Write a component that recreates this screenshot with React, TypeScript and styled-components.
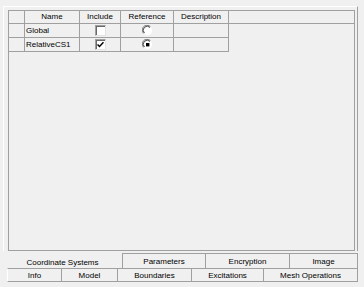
import React from "react";
import styled, { createGlobalStyle } from "styled-components";

const Global = createGlobalStyle`
  html, body { margin: 0; padding: 0; background: #f0f0f0; }
  body { font-family: "Liberation Sans", Arial, sans-serif; font-size: 8px; color: #000; }
`;

const Root = styled.div`
  width: 364px;
  height: 287px;
  background: #f0f0f0;
  overflow: hidden;
`;

const Panel = styled.div`
  margin: 6px 0 0 3px;
  width: 355px;
  height: 245px;
  box-sizing: border-box;
  border-top: 1px solid #ffffff;
  border-left: 1px solid #ffffff;
  border-right: 1px solid #a0a0a0;
  padding: 3px 3px 0 4px;
`;

const Grid = styled.div`
  width: 347px;
  height: 241px;
  box-sizing: border-box;
  border: 1px solid #a0a0a0;
  border-top: none;
  background: #f0f0f0;
`;

const Row = styled.div`
  display: grid;
  grid-template-columns: 16px 55px 41px 53px 55px 1fr;
  height: 14px;
  box-sizing: border-box;
`;

const Cell = styled.div<{ $align?: string; $head?: boolean; $noRight?: boolean }>`
  box-sizing: border-box;
  border-right: ${(p) => (p.$noRight ? "none" : "1px solid #a0a0a0")};
  border-bottom: 1px solid #a0a0a0;
  border-top: ${(p) => (p.$head ? "1px solid #a0a0a0" : "none")};
  display: flex;
  align-items: center;
  justify-content: ${(p) => p.$align || "flex-start"};
  padding-left: ${(p) => (p.$align === "flex-start" ? "1px" : "0")};
  white-space: nowrap;
  line-height: 1;
  color: #000;
`;

const Check = styled.div`
  width: 11px;
  height: 11px;
  box-sizing: border-box;
  background: #fff;
  border-top: 1px solid #a0a0a0;
  border-left: 1px solid #a0a0a0;
  border-right: 1px solid #e3e3e3;
  border-bottom: 1px solid #e3e3e3;
  box-shadow: inset 1px 1px 0 #696969;
  display: flex;
  align-items: center;
  justify-content: center;
`;

const Radio = styled.div`
  width: 11px;
  height: 11px;
  display: flex;
  align-items: center;
  justify-content: center;
`;

const Tabs = styled.div`
  display: flex;
  flex-direction: column;
  margin-top: 2px;
`;

const TabRow = styled.div<{ $indent: number }>`
  display: flex;
  padding-left: ${(p) => p.$indent}px;
`;

const Tab = styled.div<{ $w: number; $sel?: boolean; $h: number; $first?: boolean }>`
  width: ${(p) => p.$w}px;
  height: ${(p) => p.$h}px;
  box-sizing: border-box;
  display: flex;
  align-items: center;
  justify-content: center;
  white-space: nowrap;
  color: #000;
  border-top: ${(p) => (p.$sel ? "none" : "1px solid #a0a0a0")};
  border-right: ${(p) => (p.$sel ? "none" : "1px solid #a0a0a0")};
  border-left: ${(p) => (p.$first ? "1px solid #a0a0a0" : "none")};
  padding-top: ${(p) => (p.$sel ? "4px" : "0")};
`;

const BottomTab = styled(Tab)`
  border-bottom: 1px solid #a0a0a0;
  border-left: ${(p) => (p.$first ? "1px solid #ffffff" : "none")};
`;

const CheckMark = () => (
  <svg width="7" height="7" viewBox="0 0 7 7">
    <path d="M0.5 3.5 L2.5 5.5 L6.5 1.2" stroke="#000" strokeWidth="1.5" fill="none" />
  </svg>
);

const RadioIcon = ({ on }: { on?: boolean }) => (
  <svg width="11" height="11" viewBox="0 0 11 11">
    <circle cx="5.5" cy="5.5" r="4.5" fill="#fff" />
    <path d="M1.6 8.4 A4.5 4.5 0 0 1 8.4 1.6" stroke="#808080" strokeWidth="1" fill="none" />
    <path d="M2.4 8 A3.6 3.6 0 0 1 8 2.4" stroke="#404040" strokeWidth="1" fill="none" />
    {on && <rect x="4" y="4" width="3.4" height="3.4" fill="#000" />}
  </svg>
);

export default function App() {
  return (
    <Root>
      <Global />
      <Panel>
        <Grid>
          <Row>
            <Cell $head />
            <Cell $head $align="center">Name</Cell>
            <Cell $head $align="center">Include</Cell>
            <Cell $head $align="center">Reference</Cell>
            <Cell $head $align="center">Description</Cell>
            <Cell $head $noRight />
          </Row>
          <Row>
            <Cell />
            <Cell $align="flex-start">Global</Cell>
            <Cell $align="center"><Check /></Cell>
            <Cell $align="center"><Radio><RadioIcon /></Radio></Cell>
            <Cell />
          </Row>
          <Row>
            <Cell />
            <Cell $align="flex-start">RelativeCS1</Cell>
            <Cell $align="center"><Check><CheckMark /></Check></Cell>
            <Cell $align="center"><Radio><RadioIcon on /></Radio></Cell>
            <Cell />
          </Row>
        </Grid>
      </Panel>
      <Tabs>
        <TabRow $indent={3}>
          <Tab $w={119} $h={15} $sel>Coordinate Systems</Tab>
          <Tab $w={84} $h={15} $first>Parameters</Tab>
          <Tab $w={84} $h={15}>Encryption</Tab>
          <Tab $w={68} $h={15}>Image</Tab>
        </TabRow>
        <TabRow $indent={7}>
          <BottomTab $w={55} $h={14} $first>Info</BottomTab>
          <BottomTab $w={56} $h={14}>Model</BottomTab>
          <BottomTab $w={74} $h={14}>Boundaries</BottomTab>
          <BottomTab $w={72} $h={14}>Excitations</BottomTab>
          <BottomTab $w={94} $h={14}>Mesh Operations</BottomTab>
        </TabRow>
      </Tabs>
    </Root>
  );
}
